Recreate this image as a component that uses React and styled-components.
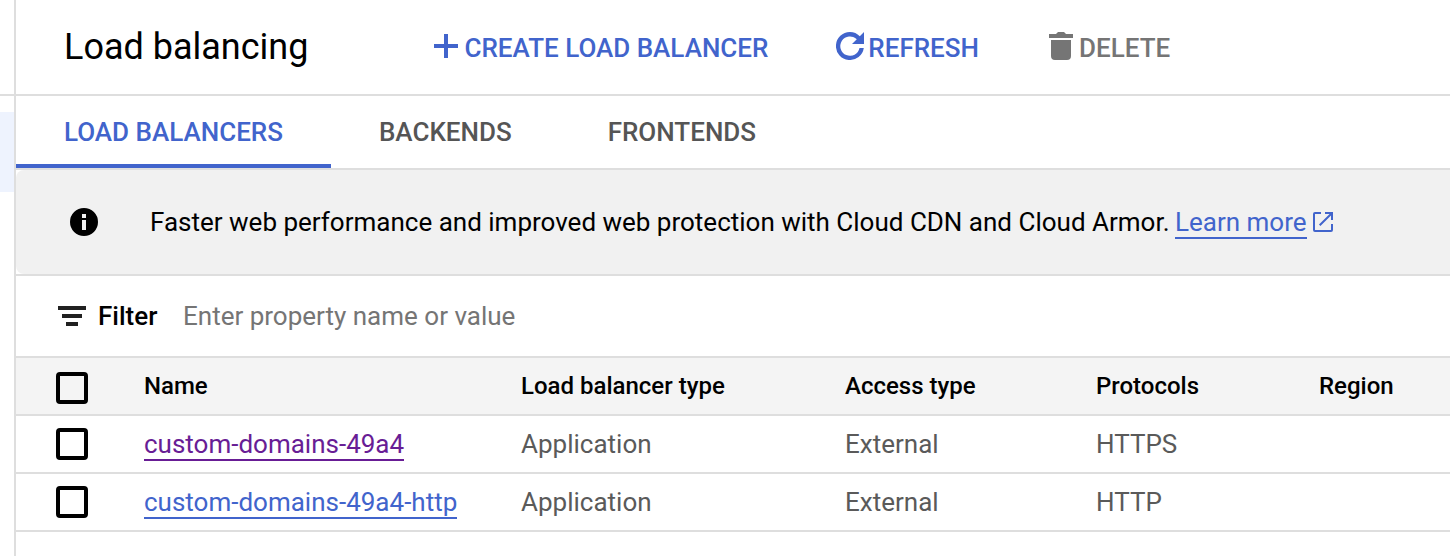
import React from "react";
import styled, { createGlobalStyle } from "styled-components";

const GlobalStyle = createGlobalStyle`
  * { box-sizing: border-box; }
  body {
    margin: 0;
    background: #fff;
    font-family: Roboto, "Liberation Sans", sans-serif;
    font-size: 26px;
    color: #000;
  }
`;

const line = "#dedede";
const blue = "#4164cc";

const Page = styled.div`
  display: flex;
  height: 556px;
  overflow: hidden;
`;

const SideNav = styled.aside`
  flex: none;
  width: 16px;
  border-right: 2px solid ${line};
`;

const SideHeader = styled.div`
  height: 96px;
  border-bottom: 2px solid ${line};
`;

const SideActive = styled.div`
  height: 80px;
  margin-top: 16px;
  background: #eef3fe;
`;

const Main = styled.main`
  flex: 1;
  min-width: 0;
`;

const Header = styled.header`
  display: flex;
  align-items: center;
  height: 96px;
  padding-left: 48px;
  border-bottom: 2px solid ${line};
`;

const Title = styled.h1`
  width: 370px;
  margin: 0;
  font-size: 36px;
  font-weight: 400;
  line-height: 48px;
`;

const Actions = styled.div`
  display: flex;
  gap: 68px;
`;

const Action = styled.button`
  display: flex;
  align-items: center;
  gap: ${(p) => p.$gap}px;
  margin-left: ${(p) => p.$indent || 0}px;
  padding: 2px 0 0;
  border: 0;
  background: none;
  color: ${(p) => (p.disabled ? "#757575" : blue)};
  font: 500 26px/32px Roboto, sans-serif;
  white-space: nowrap;

  svg { margin-bottom: 4px; }
`;

const Icon = styled.svg`
  flex: none;
  display: block;
  fill: currentColor;
`;

const Tabs = styled.nav`
  display: flex;
  height: 74px;
  border-bottom: 2px solid ${line};
`;

const Tab = styled.a`
  padding: 20px 48px 0;
  border-bottom: 4px solid ${(p) => (p.$active ? blue : "transparent")};
  color: ${(p) => (p.$active ? blue : "#555")};
  font-weight: 500;
  line-height: 32px;
`;

const Banner = styled.section`
  height: 106px;
  border-bottom: 2px solid ${line};
`;

const BannerBody = styled.div`
  display: flex;
  align-items: center;
  height: 104px;
  padding-left: 54px;
  border-radius: 8px 0 0 8px;
  background: #f1f1f1;
`;

const BannerText = styled.p`
  margin: 0 -1px 0 52px;
  line-height: 32px;
  white-space: pre;
`;

const Link = styled.a`
  display: inline-block;
  height: 34px;
  border-bottom: 2px solid currentColor;
  color: ${(p) => (p.$visited ? "#681d95" : blue)};
  line-height: 34px;
`;

const LinkIcon = styled(Icon)`
  margin-left: 6px;
  color: ${blue};
`;

const FilterBar = styled.div`
  display: flex;
  align-items: center;
  height: 82px;
  padding-left: 42px;
  border-bottom: 2px solid ${line};
`;

const FilterLabel = styled.span`
  width: 85px;
  margin-left: 12px;
  font-weight: 500;
`;

const FilterInput = styled.input`
  width: 600px;
  padding: 0;
  border: 0;
  outline: 0;
  font: inherit;

  &::placeholder { color: #757575; opacity: 1; }
`;

const Row = styled.div`
  display: grid;
  grid-template-columns: 88px 377px 324px 251px 223px 1fr;
  align-items: center;
  height: 58px;
  padding-left: 40px;
  border-bottom: 2px solid ${line};
  color: #5a5a5a;
`;

const HeadRow = styled(Row)`
  background: #f4f4f4;
  color: #000;
  font-size: 24px;
  font-weight: 500;
`;

const Checkbox = styled.span`
  width: 32px;
  height: 32px;
  margin-top: ${(p) => (p.$head ? 4 : 0)}px;
  border: 4px solid #000;
  border-radius: 4px;
`;

const Cell = styled.span`
  white-space: nowrap;
`;

const columns = ["Name", "Load balancer type", "Access type", "Protocols", "Region"];
const balancers = [
  { name: "custom-domains-49a4", type: "Application", access: "External", protocol: "HTTPS", visited: true },
  { name: "custom-domains-49a4-http", type: "Application", access: "External", protocol: "HTTP" },
];

export default function App() {
  return (
    <>
      <GlobalStyle />
      <Page>
        <SideNav>
          <SideHeader />
          <SideActive />
        </SideNav>
        <Main>
          <Header>
            <Title>Load balancing</Title>
            <Actions>
              <Action $gap={6.5}>
                <Icon width="24" height="24" viewBox="0 0 24 24">
                  <path d="M10 0h4v10h10v4H14v10h-4V14H0v-4h10z" />
                </Icon>
                CREATE LOAD BALANCER
              </Action>
              <Action $gap={4}>
                <Icon width="28" height="28" viewBox="0 0 28 28">
                  <path d="M14 0a14 14 0 1 0 13.8 16h-4.3A9.7 9.7 0 1 1 20.8 7.2L16 12h12V0l-4.2 4.2A14 14 0 0 0 14 0z" />
                </Icon>
                REFRESH
              </Action>
              <Action $gap={5.5} $indent={2.5} disabled>
                <Icon width="24" height="28" viewBox="0 0 24 28">
                  <path d="M0 2h7l2-2h6l2 2h7v4H0zM2 8h20v16a4 4 0 0 1-4 4H6a4 4 0 0 1-4-4z" />
                </Icon>
                DELETE
              </Action>
            </Actions>
          </Header>
          <Tabs>
            <Tab $active>LOAD BALANCERS</Tab>
            <Tab>BACKENDS</Tab>
            <Tab>FRONTENDS</Tab>
          </Tabs>
          <Banner>
            <BannerBody>
              <Icon width="28" height="28" viewBox="0 0 28 28">
                <path fillRule="evenodd" d="M14 0a14 14 0 1 1 0 28a14 14 0 0 1 0-28zM12 6v4h4V6zM12 12v10h4V12z" />
              </Icon>
              <BannerText>
                {"Faster web performance and improved web protection with Cloud CDN and Cloud Armor. "}
              </BannerText>
              <Link>Learn more</Link>
              <LinkIcon width="20" height="20" viewBox="0 0 20 20">
                <path d="M8 0v2H2v16h16v-6h2v6a2 2 0 0 1-2 2H2a2 2 0 0 1-2-2V2a2 2 0 0 1 2-2zM12 0h8v8h-2V3.4L7.4 14L6 12.600L16.600 2H12z" />
              </LinkIcon>
            </BannerBody>
          </Banner>
          <FilterBar>
            <Icon width="28" height="20" viewBox="0 0 28 20">
              <path fill="#212121" d="M0 0h28v4H0zM4 8h20v4H4zM8 16h12v4H8z" />
            </Icon>
            <FilterLabel>Filter</FilterLabel>
            <FilterInput placeholder="Enter property name or value" />
          </FilterBar>
          <HeadRow>
            <Checkbox $head />
            {columns.map((c) => <Cell key={c}>{c}</Cell>)}
          </HeadRow>
          {balancers.map((b) => (
            <Row key={b.name}>
              <Checkbox />
              <Cell><Link $visited={b.visited}>{b.name}</Link></Cell>
              <Cell>{b.type}</Cell>
              <Cell>{b.access}</Cell>
              <Cell>{b.protocol}</Cell>
              <Cell />
            </Row>
          ))}
        </Main>
      </Page>
    </>
  );
}
